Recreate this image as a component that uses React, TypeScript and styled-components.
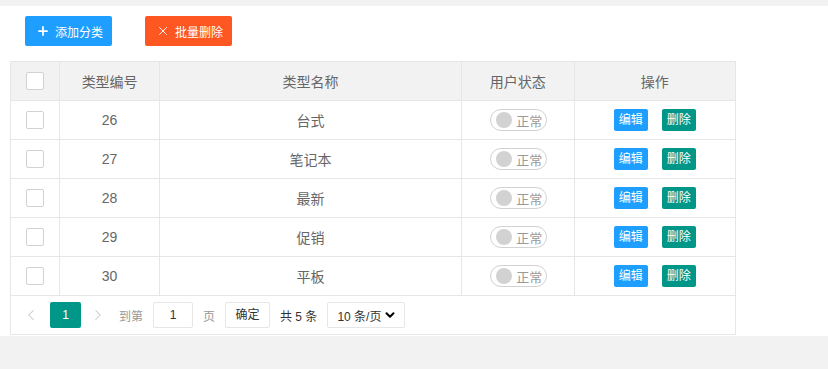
import styled, { createGlobalStyle } from "styled-components";
import { Plus, X, ChevronLeft, ChevronRight, ChevronDown } from "lucide-react";

const GlobalStyle = createGlobalStyle`
  body {
    margin: 0;
    background: #f2f2f2;
    font-family: "Liberation Sans", "Noto Sans CJK SC", sans-serif;
    color: #666;
  }
`;

const rows = [
  { id: 26, name: "台式" },
  { id: 27, name: "笔记本" },
  { id: 28, name: "最新" },
  { id: 29, name: "促销" },
  { id: 30, name: "平板" },
];

const App = () => {
  return (
    <>
      <GlobalStyle />
      <Panel>
        <Toolbar>
          <ToolButton $color="#1E9FFF">
            <Plus size={14} strokeWidth={3} />
            添加分类
          </ToolButton>
          <ToolButton $color="#FF5722">
            <X size={14} strokeWidth={1.6} />
            批量删除
          </ToolButton>
        </Toolbar>
        <TableWrap>
          <Table>
            <colgroup>
              <col style={{ width: 49 }} />
              <col style={{ width: 100 }} />
              <col style={{ width: 301 }} />
              <col style={{ width: 113 }} />
              <col style={{ width: 161 }} />
            </colgroup>
            <thead>
              <tr>
                <Th>
                  <CheckBox />
                </Th>
                <Th>类型编号</Th>
                <Th>类型名称</Th>
                <Th>用户状态</Th>
                <Th>操作</Th>
              </tr>
            </thead>
            <tbody>
              {rows.map((r) => (
                <tr key={r.id}>
                  <Td>
                    <CheckBox />
                  </Td>
                  <Td>{r.id}</Td>
                  <Td>{r.name}</Td>
                  <Td>
                    <Switch>
                      <Knob />
                      正常
                    </Switch>
                  </Td>
                  <Td>
                    <Ops>
                      <SmallButton $color="#1E9FFF">编辑</SmallButton>
                      <SmallButton $color="#009688">删除</SmallButton>
                    </Ops>
                  </Td>
                </tr>
              ))}
            </tbody>
          </Table>
          <Pager>
            <Arrow>
              <ChevronLeft size={18} strokeWidth={1.4} />
            </Arrow>
            <PageCurrent>1</PageCurrent>
            <Arrow>
              <ChevronRight size={18} strokeWidth={1.4} />
            </Arrow>
            <PagerLabel $gap={6}>到第</PagerLabel>
            <PageInput>1</PageInput>
            <PagerLabel $gap={10}>页</PagerLabel>
            <ConfirmButton>确定</ConfirmButton>
            <PagerCount>共 5 条</PagerCount>
            <PageSize>
              10 条/页
              <ChevronDown size={14} strokeWidth={3.4} color="#000" />
            </PageSize>
          </Pager>
        </TableWrap>
      </Panel>
    </>
  );
};

export default App;

const Panel = styled.div`
  margin-top: 6px;
  background: #fff;
  padding: 10px 10px 1px;
`;

const Toolbar = styled.div`
  display: flex;
  gap: 33px;
  padding-left: 15px;
  margin-bottom: 15px;
`;

const ToolButton = styled.div<{ $color: string }>`
  display: flex;
  align-items: center;
  gap: 5px;
  height: 30px;
  width: 87px;
  box-sizing: border-box;
  padding: 0 0 0 11px;
  background: ${(p) => p.$color};
  color: #fff;
  font-size: 12px;
  border-radius: 2px;
`;

const TableWrap = styled.div`
  width: 726px;
`;

const Table = styled.table`
  width: 726px;
  border-collapse: collapse;
  table-layout: fixed;
`;

const Th = styled.th`
  height: 38px;
  padding: 0;
  background: #f2f2f2;
  border: 1px solid #e6e6e6;
  font-weight: normal;
  font-size: 14px;
  color: #666;
  text-align: center;
  vertical-align: middle;
`;

const Td = styled.td`
  height: 38px;
  padding: 0;
  border: 1px solid #e6e6e6;
  font-size: 14px;
  color: #666;
  text-align: center;
  vertical-align: middle;
`;

const CheckBox = styled.span`
  display: inline-block;
  width: 18px;
  height: 18px;
  box-sizing: border-box;
  border: 1px solid #d2d2d2;
  border-radius: 2px;
  background: #fff;
  vertical-align: middle;
`;

const Switch = styled.span`
  display: inline-flex;
  align-items: center;
  gap: 4px;
  height: 22px;
  width: 57px;
  box-sizing: border-box;
  margin-left: 2px;
  padding-left: 5px;
  border: 1px solid #d2d2d2;
  border-radius: 20px;
  font-size: 13px;
  color: #999;
  vertical-align: middle;
`;

const Knob = styled.i`
  width: 16px;
  height: 16px;
  border-radius: 50%;
  background: #d2d2d2;
`;

const Ops = styled.div`
  display: flex;
  justify-content: center;
  gap: 14px;
`;

const SmallButton = styled.span<{ $color: string }>`
  display: inline-block;
  height: 22px;
  line-height: 22px;
  padding: 0 5px;
  background: ${(p) => p.$color};
  color: #fff;
  font-size: 12px;
  border-radius: 2px;
`;

const Pager = styled.div`
  display: flex;
  align-items: center;
  height: 38px;
  border: 1px solid #e6e6e6;
  border-top: none;
  padding-left: 5px;
  font-size: 12px;
  white-space: nowrap;
`;

const Arrow = styled.span`
  display: flex;
  align-items: center;
  justify-content: center;
  width: 30px;
  color: #c8c8c8;
`;

const PageCurrent = styled.span`
  width: 31px;
  height: 26px;
  line-height: 26px;
  margin: 0 2px 0 4px;
  text-align: center;
  background: #009688;
  color: #fff;
  border-radius: 2px;
`;

const PagerLabel = styled.span<{ $gap: number }>`
  margin-left: ${(p) => p.$gap}px;
  color: #999;
`;

const PageInput = styled.span`
  width: 40px;
  height: 26px;
  line-height: 24px;
  box-sizing: border-box;
  margin-left: 10px;
  border: 1px solid #e6e6e6;
  border-radius: 2px;
  text-align: center;
  color: #333;
`;

const ConfirmButton = styled.span`
  width: 45px;
  height: 26px;
  line-height: 24px;
  box-sizing: border-box;
  margin-left: 10px;
  border: 1px solid #e6e6e6;
  border-radius: 2px;
  text-align: center;
  color: #333;
`;

const PagerCount = styled.span`
  margin-left: 10px;
  color: #333;
`;

const PageSize = styled.span`
  display: flex;
  align-items: center;
  justify-content: space-between;
  flex-shrink: 0;
  width: 78px;
  height: 26px;
  box-sizing: border-box;
  margin-left: 10px;
  padding: 0 7px 0 9px;
  border: 1px solid #e6e6e6;
  border-radius: 2px;
  color: #333;
  font-size: 12px;
`;
